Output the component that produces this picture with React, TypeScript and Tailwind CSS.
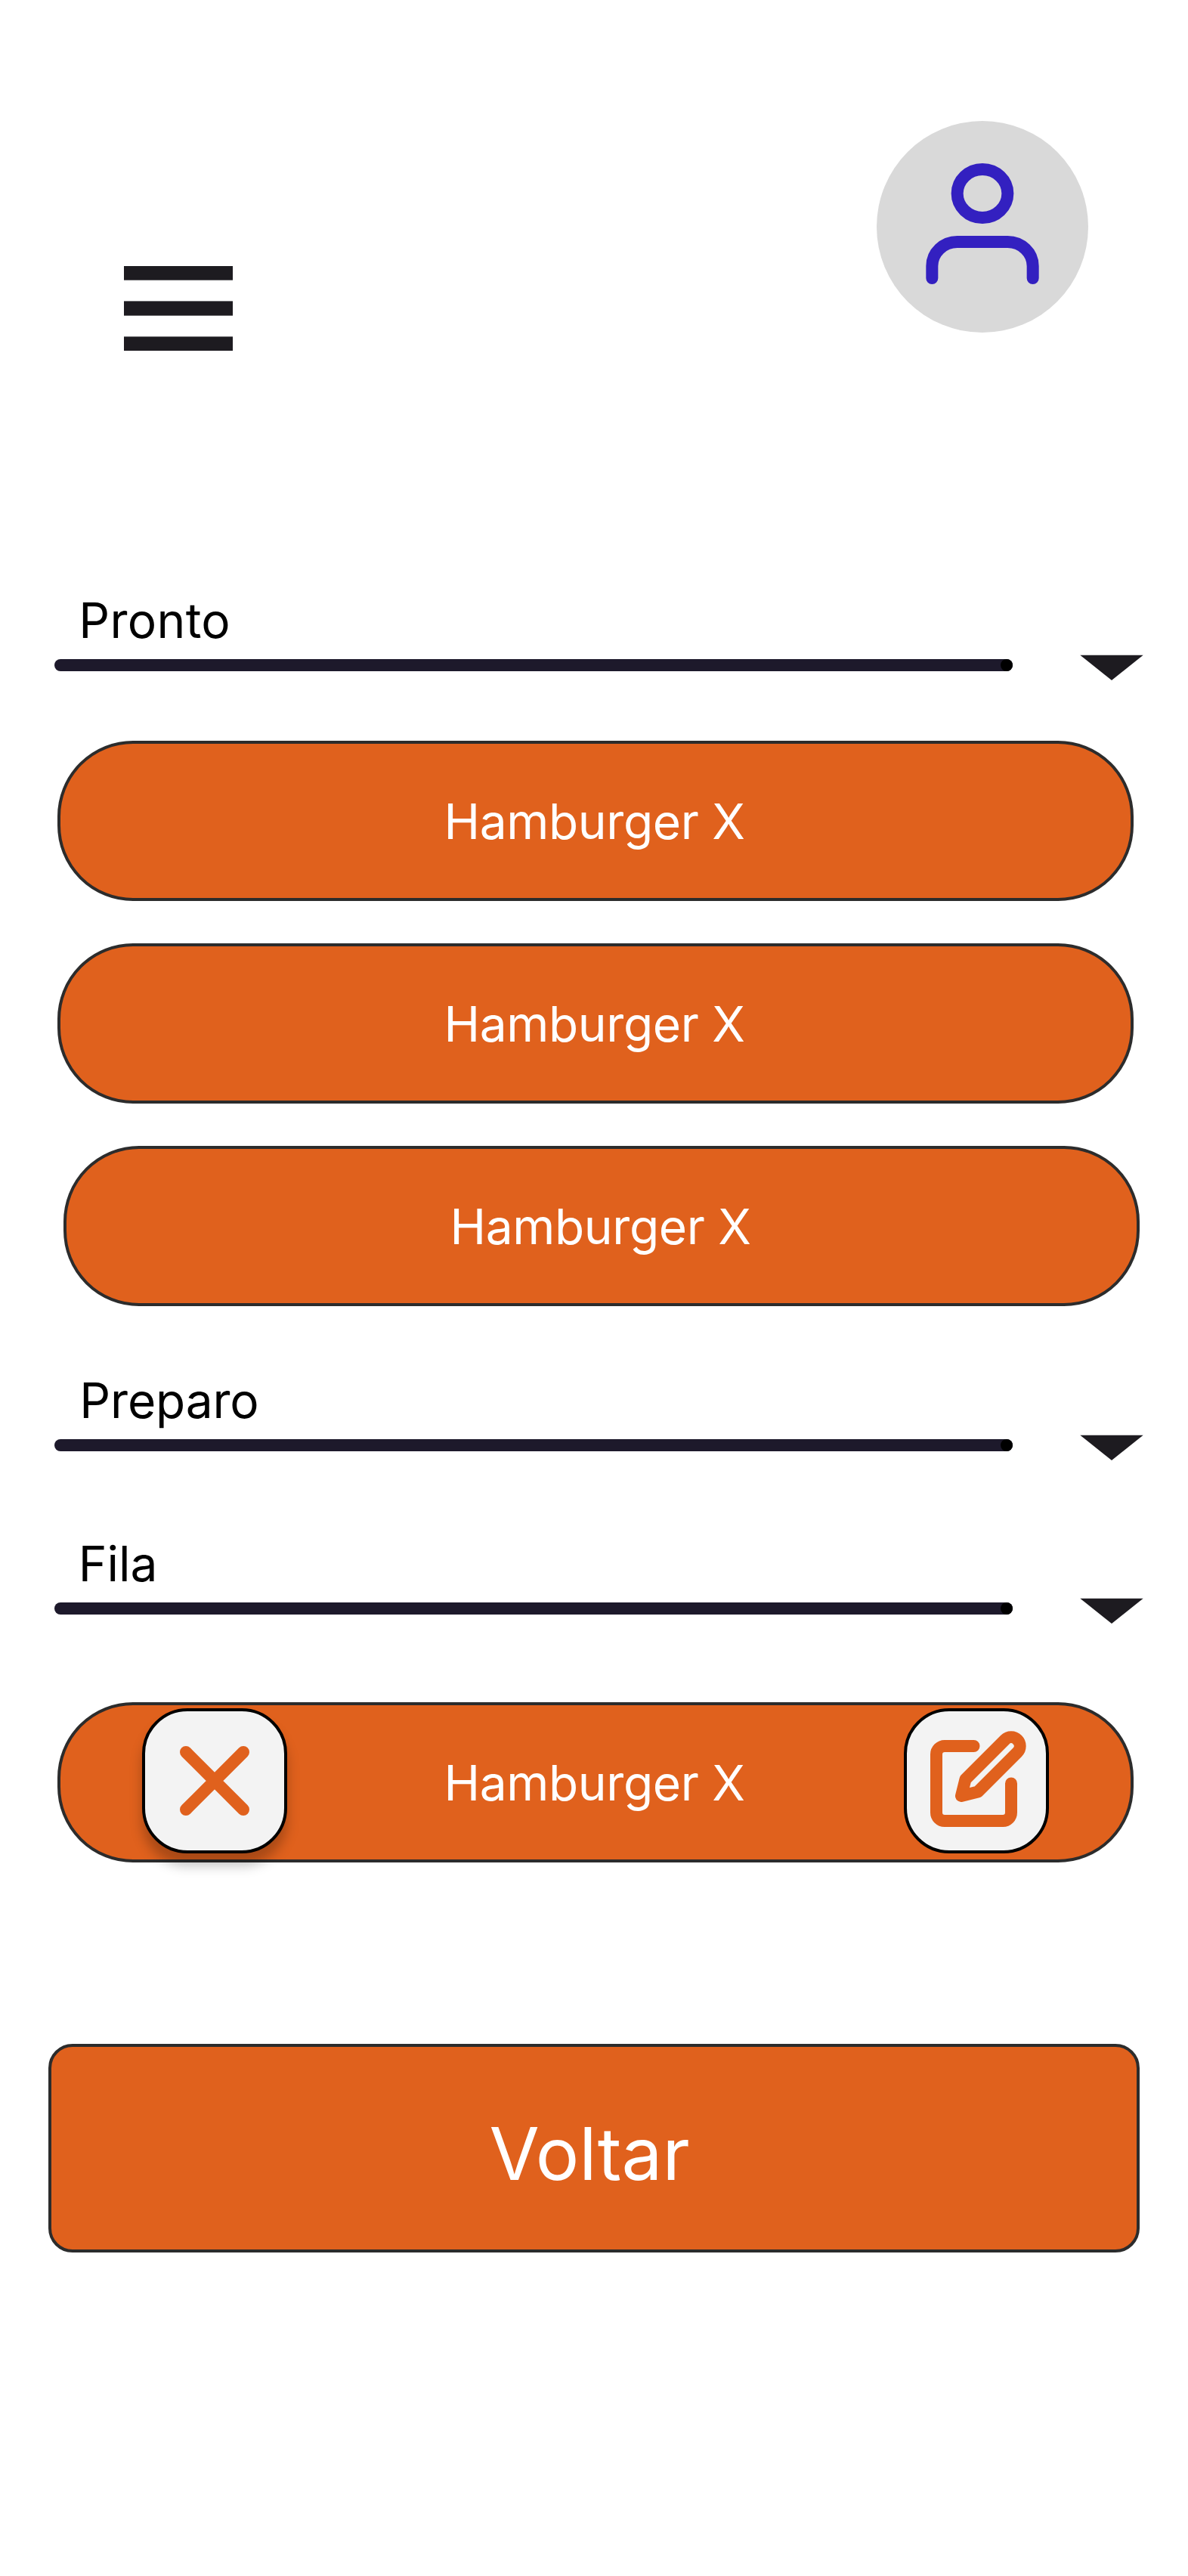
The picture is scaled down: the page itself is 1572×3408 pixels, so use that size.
import type { ReactNode } from "react";

function MenuIcon() {
  return (
    <svg width="144" height="112" viewBox="0 0 144 112" fill="#1D1B20">
      <rect width="144" height="18.667" />
      <rect y="46.4" width="144" height="19.2" />
      <rect y="93.333" width="144" height="18.667" />
    </svg>
  );
}

function UserIcon() {
  return (
    <svg
      width="280"
      height="280"
      viewBox="0 0 280 280"
      fill="none"
      stroke="#3320C0"
      strokeWidth="16"
      strokeLinecap="round"
    >
      <ellipse cx="140" cy="96" rx="33.333" ry="32" />
      <path d="M73.333 208V192A33.333 32 0 0 1 106.667 160H173.333A33.333 32 0 0 1 206.667 192V208" />
    </svg>
  );
}

function CloseIcon() {
  return (
    <svg width="92" height="92" viewBox="0 0 92 92" fill="none" stroke="#E0611D" strokeWidth="16" strokeLinecap="round">
      <path d="M8 8L84 84M84 8L8 84" />
    </svg>
  );
}

function EditIcon() {
  return (
    <svg
      width="132"
      height="132"
      viewBox="0 0 24 24"
      fill="none"
      stroke="#E0611D"
      strokeWidth="2.909"
      strokeLinecap="round"
      strokeLinejoin="round"
      className="shrink-0 overflow-visible"
    >
      <path d="M11 4H4a2 2 0 0 0-2 2v14a2 2 0 0 0 2 2h14a2 2 0 0 0 2-2v-7" />
      <path d="M18.5 2.5a2.121 2.121 0 0 1 3 3L12 15l-4 1 1-4 9.5-9.5z" />
    </svg>
  );
}

function SectionHeader({ title, className }: { title: string; className: string }) {
  return (
    <div className="flex h-[99px] justify-between pr-[59px] pl-[72px]">
      <div className="w-[1268px]">
        <h2 className={`h-[83px] text-[64px] leading-[64px] font-normal text-black ${className}`}>{title}</h2>
        <div className="flex h-4 justify-end rounded-full bg-[#1D192B]">
          <span className="size-4 rounded-full bg-black" />
        </div>
      </div>
      <svg width="84" height="34" viewBox="0 0 84 34" fill="#1D1B20" className="mt-[77px] shrink-0">
        <path d="M0.333 0.667H83.667L42 34Z" />
      </svg>
    </div>
  );
}

function OrderButton({ children, className = "ml-[76px]" }: { children: ReactNode; className?: string }) {
  return (
    <div
      className={`relative flex h-[212px] w-[1424px] items-center justify-center rounded-[100px] border-4 border-[#2C2C2C] bg-[#E0611D] pt-0.5 pr-[3px] text-[64px] leading-[64px] tracking-[-0.37px] text-white ${className}`}
    >
      {children}
    </div>
  );
}

export default function App() {
  return (
    <main className="flex h-[3408px] w-[1572px] flex-col overflow-hidden bg-white font-['Inter',sans-serif]">
      <header className="flex h-[464px] shrink-0 items-start justify-between pt-40 pr-[132px] pl-[164px]">
        <button className="mt-48 block h-28">
          <MenuIcon />
        </button>
        <div className="size-[280px] rounded-full bg-[#D9D9D9]">
          <UserIcon />
        </div>
      </header>

      <section className="mt-[325px]">
        <SectionHeader title="Pronto" className="pl-[32.3px] tracking-[0.33px]" />
        <div className="mt-[92px] flex flex-col gap-14">
          <OrderButton>Hamburger X</OrderButton>
          <OrderButton>Hamburger X</OrderButton>
          <OrderButton className="ml-[84px]">Hamburger X</OrderButton>
        </div>
      </section>

      <section className="mt-[93px]">
        <SectionHeader title="Preparo" className="pl-[33.3px] tracking-[-0.16px]" />
      </section>

      <section className="mt-[117px]">
        <SectionHeader title="Fila" className="pl-[31.7px]" />
        <div className="mt-[116px]">
          <OrderButton>
            <button className="absolute top-1 left-[108px] flex size-48 items-center justify-center rounded-[60px] border-4 border-black bg-[#F3F3F3] shadow-[0_16px_16px_rgba(0,0,0,0.25)]">
              <CloseIcon />
            </button>
            Hamburger X
            <button className="absolute top-1 right-[108px] flex size-48 items-start rounded-[60px] border-4 border-black bg-[#F3F3F3] pt-6 pl-7">
              <EditIcon />
            </button>
          </OrderButton>
        </div>
      </section>

      <button className="mt-60 ml-16 flex h-[276px] w-[1444px] items-center justify-center rounded-[32px] border-4 border-[#2C2C2C] bg-[#E0611D] pt-[14px] pr-3 text-[96px] leading-[96px] tracking-[-0.1px] text-white">
        Voltar
      </button>
    </main>
  );
}
